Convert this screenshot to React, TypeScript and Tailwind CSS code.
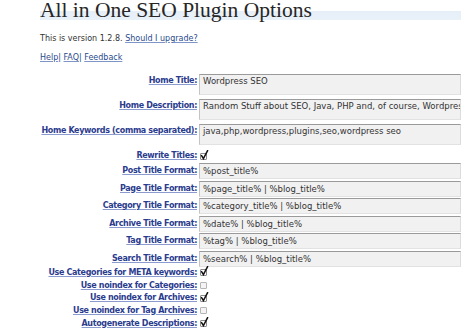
import React from "react";

const labelCls =
  "w-[197px] shrink-0 text-right font-bold text-[#2b3c8e] tracking-[-0.35px] underline decoration-[#8b9bd0] underline-offset-[1px] whitespace-nowrap";

function Box({ h, children }: { h: string; children: React.ReactNode }) {
  return (
    <div
      className={`ml-[2px] w-[262px] ${h} border-t border-l border-b border-r border-t-[#9a9a9a] border-l-[#c4c4c4] border-b-[#e2e2e2] border-r-[#dcdcdc] bg-[#f1f1f1] pl-[3px] text-[8.5px] text-[#333] whitespace-nowrap overflow-hidden`}
    >
      {children}
    </div>
  );
}

function Check({ checked }: { checked: boolean }) {
  return (
    <div className="ml-[3px] relative w-[7px] h-[7px]">
      <div
        className={`w-[7px] h-[7px] rounded-[1px] border ${
          checked ? "border-[#8a8a8a] bg-white" : "border-[#b5b5b5] bg-[#f4f4f4]"
        }`}
      />
      {checked && (
        <svg
          className="absolute left-[0px] top-[-3px]"
          width="9"
          height="10"
          viewBox="0 0 9 10"
        >
          <path d="M1.6 5.6 L3.4 8.6 L7.6 0.6" stroke="#111" strokeWidth="1.5" fill="none" strokeLinecap="round" />
        </svg>
      )}
    </div>
  );
}

export default function App() {
  const textareas = [
    ["Home Title:", "Wordpress SEO"],
    ["Home Description:", "Random Stuff about SEO, Java, PHP and, of course, Wordpress"],
    ["Home Keywords (comma separated):", "java,php,wordpress,plugins,seo,wordpress seo"],
  ];
  const inputs = [
    ["Page Title Format:", "%page_title% | %blog_title%"],
    ["Category Title Format:", "%category_title% | %blog_title%"],
    ["Archive Title Format:", "%date% | %blog_title%"],
    ["Tag Title Format:", "%tag% | %blog_title%"],
    ["Search Title Format:", "%search% | %blog_title%"],
  ];
  const checks: [string, boolean][] = [
    ["Use Categories for META keywords:", true],
    ["Use noindex for Categories:", false],
    ["Use noindex for Archives:", true],
    ["Use noindex for Tag Archives:", false],
    ["Autogenerate Descriptions:", true],
  ];
  return (
    <div className="w-[468px] h-[331px] overflow-hidden bg-white font-['DejaVu_Sans',sans-serif] text-[8px] leading-[10px] text-[#333]">
      <h2 className="ml-[40px] mt-[-2px] w-[421px] h-[24px] text-[21.5px] leading-[24px] font-normal font-['Liberation_Serif',serif] text-[#262626] bg-[linear-gradient(to_bottom,transparent_0px,transparent_13px,#e6eff8_13px,#e9f1f9_22px,transparent_22px)]">
        All in One SEO Plugin Options
      </h2>
      <p className="ml-[40px] mt-[12px]">
        This is version 1.2.8.{" "}
        <a className="text-[#2a4b8d] underline decoration-[#7f95c8] underline-offset-[1px]">Should I upgrade?</a>
      </p>
      <p className="ml-[40px] mt-[9px] text-[#2a4b8d]">
        <a className="underline decoration-[#7f95c8] underline-offset-[1px]">Help</a>|{" "}
        <a className="underline decoration-[#7f95c8] underline-offset-[1px]">FAQ</a>|{" "}
        <a className="underline decoration-[#7f95c8] underline-offset-[1px]">Feedback</a>
      </p>
      <div className="mt-[11px] flex flex-col">
        {textareas.map(([l, v]) => (
          <div key={l} className="flex items-start h-[25px]">
            <div className={`${labelCls} pt-[2px]`}>{l}</div>
            <Box h="h-[21px] pt-[1px]">{v}</Box>
          </div>
        ))}
        <div className="flex items-center h-[12px] mt-[1px]">
          <div className={labelCls}>Rewrite Titles:</div>
          <Check checked />
        </div>
        <div className="flex items-center h-[16px] mt-[1px]">
          <div className={labelCls}>Post Title Format:</div>
          <Box h="h-[16px] leading-[14px]">%post_title%</Box>
        </div>
        {inputs.map(([l, v]) => (
          <div key={l} className="flex items-center h-[16px] mt-[1.6px]">
            <div className={labelCls}>{l}</div>
            <Box h="h-[16px] leading-[14px]">{v}</Box>
          </div>
        ))}
        <div className="mt-[-0.5px]" />
        {checks.map(([l, c]) => (
          <div key={l} className="flex items-center h-[12.7px]">
            <div className={labelCls}>{l}</div>
            <Check checked={c} />
          </div>
        ))}
      </div>
    </div>
  );
}
